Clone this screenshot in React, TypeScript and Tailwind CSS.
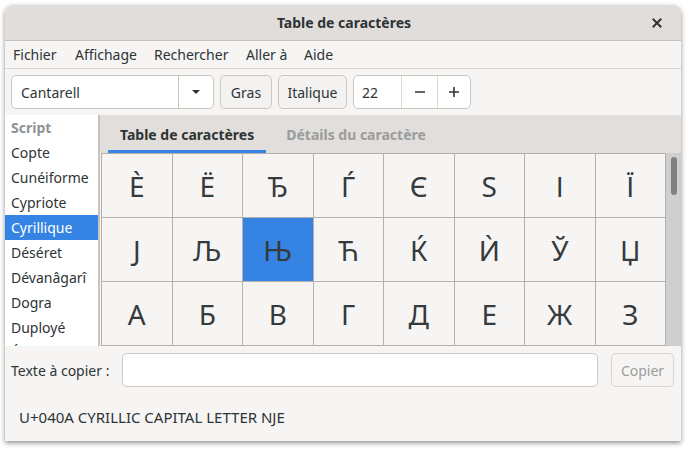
import React from "react";

const glyphs = [
  ["Ѐ", "Ё", "Ђ", "Ѓ", "Є", "Ѕ", "І", "Ї"],
  ["Ј", "Љ", "Њ", "Ћ", "Ќ", "Ѝ", "Ў", "Џ"],
  ["А", "Б", "В", "Г", "Д", "Е", "Ж", "З"],
];

const scripts = ["Copte", "Cunéiforme", "Cypriote", "Cyrillique", "Déséret", "Dévanâgarî", "Dogra", "Duployé", "Égyptien"];

export default function App() {
  const font = { fontFamily: '"Noto Sans", "DejaVu Sans", sans-serif' };
  return (
    <div className="w-[690px] h-[450px] bg-white pl-[5px] pt-[5px] text-[#2e3436]" style={font}>
      <div className="w-[676px] h-[436px] bg-[#f6f5f4] rounded-t-[8px] flex flex-col overflow-hidden shadow-[0_2px_5px_rgba(0,0,0,0.45)]">
        {/* Title bar */}
        <div className="h-[36px] shrink-0 bg-[#e0ddda] border-b border-[#c6c1bc] flex items-center relative rounded-t-[8px]">
          <div className="flex-1 text-center text-[14px] font-bold leading-none pl-[2px]">Table de caractères</div>
          <div className="absolute right-[19px] top-[13px] w-[10px] h-[10px]">
            <svg width="10" height="10" viewBox="0 0 10 10">
              <path d="M1.5 1.5 L8.5 8.5 M8.5 1.5 L1.5 8.5" stroke="#2e3436" strokeWidth="2" strokeLinecap="square" />
            </svg>
          </div>
        </div>
        {/* Menu bar */}
        <div className="h-[28px] shrink-0 border-b border-[#d8d4d0] flex items-center pl-[8px] text-[14px]">
          <span className="w-[62px]">Fichier</span>
          <span className="w-[79px]">Affichage</span>
          <span className="w-[92px]">Rechercher</span>
          <span className="w-[58px]">Aller à</span>
          <span>Aide</span>
        </div>
        {/* Toolbar */}
        <div className="h-[46px] shrink-0 flex items-start pt-[6px] pl-[6px] text-[14px]">
          <div className="w-[203px] h-[34px] bg-white border border-[#cdc7c2] rounded-[5px] flex">
            <div className="flex-1 flex items-center pl-[9px]">Cantarell</div>
            <div className="w-[35px] border-l border-[#cdc7c2] flex items-center justify-center">
              <svg width="10" height="6" viewBox="0 0 10 6">
                <path d="M1 1 L9 1 L5 5 Z" fill="#2e3436" />
              </svg>
            </div>
          </div>
          <div className="ml-[6px] w-[52px] h-[34px] border border-[#cdc7c2] rounded-[5px] bg-[#f3f2f1] flex items-center justify-center">Gras</div>
          <div className="ml-[6px] w-[69px] h-[34px] border border-[#cdc7c2] rounded-[5px] bg-[#f3f2f1] flex items-center justify-center">Italique</div>
          <div className="ml-[6px] w-[118px] h-[34px] border border-[#cdc7c2] rounded-[5px] bg-white flex">
            <div className="w-[47px] flex items-center pl-[8px]">22</div>
            <div className="w-[36px] border-l border-[#dcd8d4] flex items-center justify-center">
              <svg width="12" height="12" viewBox="0 0 12 12">
                <path d="M1 6 H11" stroke="#2e3436" strokeWidth="1.6" />
              </svg>
            </div>
            <div className="flex-1 border-l border-[#dcd8d4] flex items-center justify-center">
              <svg width="12" height="12" viewBox="0 0 12 12">
                <path d="M1 6 H11 M6 1 V11" stroke="#2e3436" strokeWidth="1.6" />
              </svg>
            </div>
          </div>
        </div>
        {/* Main */}
        <div className="h-[231px] shrink-0 flex">
          <div className="w-[95px] bg-white border-r-2 border-[#c8c3be] overflow-hidden text-[14px] shrink-0">
            <div className="h-[25px] flex items-center pl-[6px] font-bold text-[#8f9293]">Script</div>
            {scripts.map((s) => (
              <div
                key={s}
                className={
                  "h-[25px] flex items-center pl-[6px] " +
                  (s === "Cyrillique" ? "bg-[#3584e4] text-white" : "")
                }
              >
                {s}
              </div>
            ))}
          </div>
          <div className="flex-1 flex flex-col">
            <div className="h-[38px] shrink-0 bg-[#e1dedb] flex items-stretch pl-[8px] text-[14px] font-bold">
              <div className="px-[12px] flex items-center border-b-[3px] border-[#3584e4] pt-[3px]">Table de caractères</div>
              <div className="ml-[8px] px-[12px] flex items-center text-[#9a9c9c] pb-0">Détails du caractère</div>
            </div>
            <div className="flex-1 flex pl-[1px]">
              <div className="w-[565px] border-t border-l border-[#b5b0ab] grid grid-cols-8 content-start">
                {glyphs.flat().map((g, i) => (
                  <div
                    key={i}
                    className={
                      "h-[64px] border-r border-b border-[#b5b0ab] flex items-center justify-center text-[28px] leading-none text-[#353a3c] " +
                      (g === "Њ" ? "bg-[#3584e4]" : "bg-[#f6f5f4]")
                    }
                  >
                    {g}
                  </div>
                ))}
              </div>
              <div className="flex-1 bg-[#cfcfcf] flex justify-center pt-[4px]">
                <div className="w-[6px] h-[38px] rounded-full bg-[#7e8283]" />
              </div>
            </div>
          </div>
        </div>
        {/* Bottom */}
        <div className="flex-1 flex flex-col text-[14px]">
          <div className="flex items-center pt-[7px] pl-[6px] pr-[7px]">
            <div className="flex-1">Texte à copier :</div>
            <div className="w-[476px] h-[34px] bg-white border border-[#cdc7c2] rounded-[5px]" />
            <div className="ml-[13px] w-[63px] h-[34px] border border-[#d9d5d1] rounded-[5px] flex items-center justify-center text-[#9a9c9c]">Copier</div>
          </div>
          <div className="pl-[14px] mt-[19px] leading-[22px] text-[15px]">U+040A CYRILLIC CAPITAL LETTER NJE</div>
        </div>
      </div>
    </div>
  );
}
